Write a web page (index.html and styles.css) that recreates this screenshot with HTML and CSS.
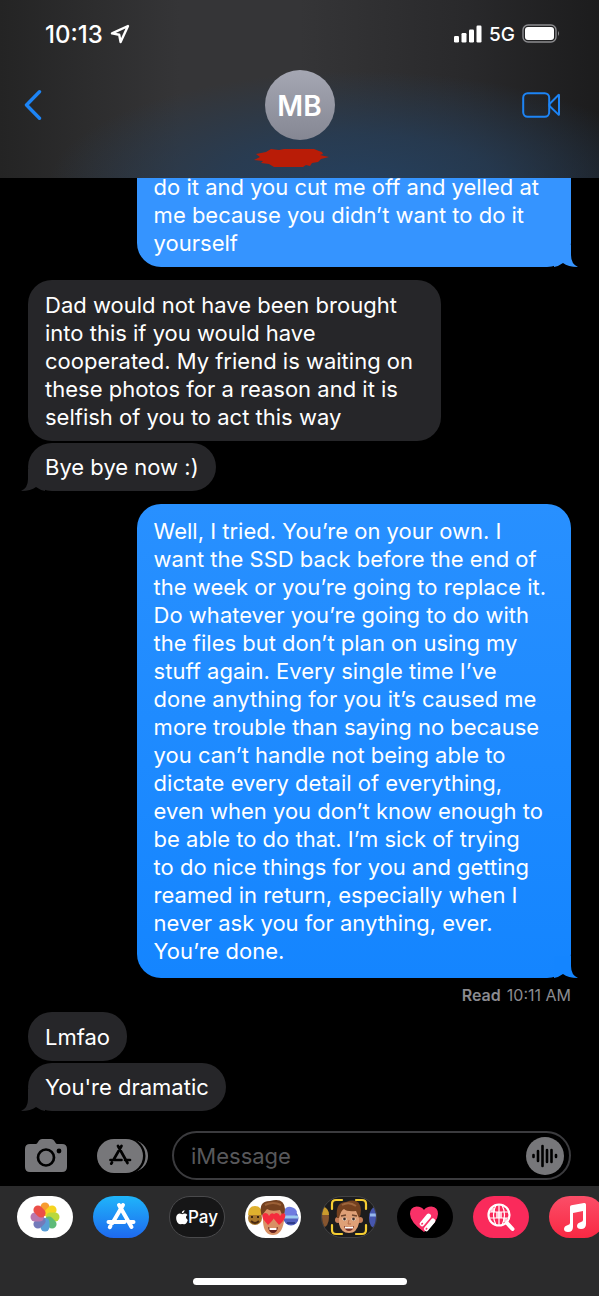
FILE: index.html
```html
<!DOCTYPE html>
<html lang="en">
<head>
<meta charset="utf-8">
<meta name="viewport" content="width=device-width, initial-scale=1">
<title>Messages</title>
<link rel="stylesheet" href="styles.css">
</head>
<body>
<div class="phone">
  <header class="header">
    <div class="status">
      <div class="status-group">
        <time class="clock">10:13</time>
        <svg class="location" viewBox="0 0 20 20" aria-hidden="true"><path d="M18 2 2 9.4l7.2 1.3L10.600 18Z" fill="none" stroke="#fff" stroke-width="2.400" stroke-linejoin="round"/></svg>
      </div>
      <div class="status-group">
        <svg class="signal" viewBox="0 0 28 18" fill="#fff" aria-hidden="true"><rect y="11" width="5" height="6.500" rx="1.200"/><rect x="7.500" y="8" width="5" height="9.500" rx="1.200"/><rect x="15" y="4.500" width="5" height="13" rx="1.200"/><rect x="22.500" y=".5" width="5" height="17" rx="1.200"/></svg>
        <span class="network">5G</span>
        <svg class="battery" viewBox="0 0 38 20" aria-hidden="true"><rect x="1" y="1" width="33" height="17" rx="5" fill="none" stroke="#8c8c8f" stroke-width="1.400"/><rect x="3" y="3" width="29" height="13" rx="3" fill="#fff"/><path d="M36 7q2 2.500 0 5Z" fill="#8c8c8f"/></svg>
      </div>
    </div>
    <div class="nav">
      <button class="icon-button" aria-label="Back"><svg class="back" viewBox="0 0 18 30"><path d="M15.500 1.800 2.500 15l13 13.200" fill="none" stroke="#1d84f5" stroke-width="3.400" stroke-linecap="round" stroke-linejoin="round"/></svg></button>
      <button class="contact" aria-label="Contact details">
        <span class="avatar">MB</span>
        <svg class="scribble" viewBox="0 0 76 20" aria-hidden="true"><path d="m0 12 6-3-4-3 10-2 5-3 8 1 5-1h30l5 2 3 1 1 2-3 1 9 2-8 2-3 3-6 1-2 3-4-1-3 2H20l-5-3-8-1 2-2Z" fill="#b91c07"/></svg>
      </button>
      <button class="icon-button" aria-label="FaceTime"><svg class="video" viewBox="0 0 38 26"><g fill="none" stroke="#1d84f5" stroke-width="2" stroke-linejoin="round"><rect x="1.200" y="1.200" width="26" height="23.600" rx="4.500"/><path d="m27.500 12 9-9q.5-.4.5.4v18.800q0 .8-.5.400L27.500 14Z"/></g></svg></button>
    </div>
  </header>

  <main class="thread">
    <p class="bubble sent sent-early tail-right">do it and you cut me off and yelled at me because you didn’t want to do it yourself</p>
    <div class="group">
      <p class="bubble received">Dad would not have been brought into this if you would have cooperated. My friend is waiting on these photos for a reason and it is selfish of you to act this way</p>
      <p class="bubble received tail-left">Bye bye now :)</p>
    </div>
    <p class="bubble sent long tail-right">Well, I tried. You’re on your own. I want the SSD back before the end of the week or you’re going to replace it. Do whatever you’re going to do with the files but don’t plan on using my stuff again. Every single time I’ve done anything for you it’s caused me more trouble than saying no because you can’t handle not being able to dictate every detail of everything, even when you don’t know enough to be able to do that. I’m sick of trying<br> to do nice things for you and getting reamed in return, especially when I never ask you for anything, ever. You’re done.</p>
    <p class="receipt"><b>Read</b> <span>10:11 AM</span></p>
    <div class="group">
      <p class="bubble received">Lmfao</p>
      <p class="bubble received tail-left">You're dramatic</p>
    </div>
  </main>

  <form class="composer">
    <button type="button" class="icon-button" aria-label="Camera"><svg class="camera" viewBox="0 0 42 34"><path d="M5 5h6q1 0 2-2l1-1.500Q15 0 17 0h9q2 0 3 1.500L30 3q1 2 2 2h5q5 0 5 5v18q0 5-5 5H5q-5 0-5-5V10q0-5 5-5Z" fill="#77777a"/><circle cx="21" cy="18.500" r="8" fill="none" stroke="#000" stroke-width="2.700"/><circle cx="34" cy="12" r="2.400" fill="#000"/></svg></button>
    <button type="button" class="icon-button" aria-label="Apps"><svg class="drawer" viewBox="0 0 51 34"><rect x="5" y="1" width="46" height="32" rx="16" fill="#77777a"/><rect x="1" y="-1" width="47.500" height="36" rx="18" fill="#000"/><rect width="46" height="34" rx="17" fill="#77777a"/><g fill="none" stroke="#000" stroke-width="2.700" stroke-linecap="round"><path d="m21 7 9.500 17M24.500 7 17 20M13.500 21h11M28 21h5M15 23.500l-.8 1.200"/></g></svg></button>
    <label class="field">
      <input type="text" placeholder="iMessage" aria-label="iMessage">
      <button type="button" class="icon-button" aria-label="Record audio"><svg class="audio" viewBox="0 0 38 38"><circle cx="19" cy="19" r="19" fill="#77777a"/><path d="M7.500 18v2M12 14v10M16.500 9v20M21 13v12M25.500 13v12M30 18v2" stroke="#000" stroke-width="2.600" stroke-linecap="round"/></svg></button>
    </label>
  </form>

  <footer class="dock">
    <nav class="apps" aria-label="iMessage apps">
      <button class="app photos" aria-label="Photos"><svg viewBox="0 0 56 42"><g opacity=".92"><rect x="23.500" y="6.500" width="9" height="13.500" rx="4.500" fill="#f7941e"/><rect x="23.500" y="6.500" width="9" height="13.500" rx="4.500" fill="#f6d10c" transform="rotate(45 28 21)"/><rect x="23.500" y="6.500" width="9" height="13.500" rx="4.500" fill="#b3d52c" transform="rotate(90 28 21)"/><rect x="23.500" y="6.500" width="9" height="13.500" rx="4.500" fill="#51b56d" transform="rotate(135 28 21)"/><rect x="23.500" y="6.500" width="9" height="13.500" rx="4.500" fill="#4b96d3" transform="rotate(180 28 21)"/><rect x="23.500" y="6.500" width="9" height="13.500" rx="4.500" fill="#686fb5" transform="rotate(225 28 21)"/><rect x="23.500" y="6.500" width="9" height="13.500" rx="4.500" fill="#b36da8" transform="rotate(270 28 21)"/><rect x="23.500" y="6.500" width="9" height="13.500" rx="4.500" fill="#ea4039" transform="rotate(315 28 21)"/></g></svg></button>
      <button class="app store" aria-label="App Store"><svg viewBox="0 0 56 42"><g fill="none" stroke="#fff" stroke-width="4" stroke-linecap="round"><path d="m26 9 12.500 22M30 9 19.500 27M15.500 26h16M36 26h4.500M17.500 30l-.7 1.200"/></g></svg></button>
      <button class="app pay" aria-label="Apple Pay"><svg class="apple" viewBox="0 0 12 15"><path d="M8.500 0q0 3-2.800 3.200Q5.700.8 8.500 0ZM6.200 4.200Q9.500 2.500 11.500 5q-3.300 2 .3 5-1.600 4.800-3.800 4.300-1.800-.8-3.600 0Q1.700 14.300.4 10 -.7 4.300 3.500 3.500q1.500.1 2.700.7Z" fill="#fff"/></svg><span>Pay</span></button>
      <button class="app memoji-light" aria-label="Memoji stickers"><svg viewBox="0 0 56 42">
        <circle cx="10" cy="22" r="7" fill="#a9762b"/><path d="M3 19q0-9 7-9t7 9Z" fill="#dfb02e"/><path d="M6 21h2m4 0h2" stroke="#3b2410" stroke-width="2"/><path d="M6 25q4 4 8 0" stroke="#4b2b12" stroke-width="2" fill="none"/>
        <circle cx="46" cy="22" r="7.500" fill="#5361bf"/><path d="M39 15q2-5 7-4t6 5l-2 4H40Z" fill="#6f7be0"/><path d="M39 21h14" stroke="#9cc9ef" stroke-width="3"/><path d="M42 27h8" stroke="#303d8c" stroke-width="2"/>
        <path d="M18 17q0-10 10-10t11 10v8q-2 14-11 14T18 26Z" fill="#d99064"/><path d="M17 21Q12 5 25 5q14-4 15 8 0 5-2 8l-3-7q-9 2-13-1l-4 5Z" fill="#75411f"/><path d="M20 9q8-4 16 0" stroke="#9b6036" stroke-width="2" fill="none"/>
        <path d="m23 29-5-6q-2-5 2-6 3 0 4 3 2-4 5-2 3 3-6 11ZM34 29l-5-6q-2-5 2-6 3 0 4 3 2-4 5-2 2 4-6 11Z" fill="#f52c3d"/><path d="M23 31q5 3 10 0-1 6-5 6t-5-6Z" fill="#65221e"/><path d="M24.500 32h7v2h-7Z" fill="#fff"/></svg></button>
      <button class="app memoji-dark" aria-label="Memoji"><svg viewBox="0 0 56 42">
        <path d="M0 12q8-1 8 9t-7 11Z" fill="#86552f"/><path d="M1 10q7 2 7 9H0Z" fill="#c99b2d"/><path d="M56 10q-8 2-8 12t7 10Z" fill="#4656ae"/><path d="M49 19h7" stroke="#96b8ec" stroke-width="3"/>
        <circle cx="17" cy="24" r="3" fill="#c77f58"/><circle cx="39" cy="24" r="3" fill="#c77f58"/><path d="M18 17q0-7 10-7t10 8v9q-2 10-10 10t-10-9Z" fill="#dfa077"/><path d="M16 22Q14 6 25 6q14-5 15 8 0 5-2 8l-3-7q-9 1-12-2-3 1-5 9Z" fill="#75411f"/><path d="M21 9q7-4 14 1" stroke="#9e653c" stroke-width="2" fill="none"/>
        <path d="m20 20 5-1m6 0 5 1" stroke="#70452d" stroke-width="1.500"/><ellipse cx="23.500" cy="23" rx="2" ry="1.500" fill="#fff"/><ellipse cx="32.500" cy="23" rx="2" ry="1.500" fill="#fff"/><circle cx="23.500" cy="23" r="1.400" fill="#422b20"/><circle cx="32.500" cy="23" r="1.400" fill="#422b20"/><path d="m28 24-1 4h3" fill="none" stroke="#b96e4b"/><path d="M23 30q5 2 10 0-1 5-5 5t-5-5Z" fill="#752e27"/><path d="M24 30.500q4 1 8 0v2h-8Z" fill="#fff"/>
        <path d="M11 13V8q0-4 4-4h6M35 4h6q4 0 4 4v5M45 29v5q0 4-4 4h-6M21 38h-6q-4 0-4-4v-5" fill="none" stroke="#f5cd32" stroke-width="2.200" stroke-linecap="round"/></svg></button>
      <button class="app touch" aria-label="Digital Touch"><svg viewBox="0 0 56 42"><path d="M27 36Q13 26 13 18q0-7 6.500-7.500Q25 10.500 27 14q2-3.500 7.500-3.500Q41 11 41 18q0 8-14 18Z" fill="#fa3168"/><g transform="rotate(-50 30 26)"><rect x="23" y="21" width="15" height="4.800" rx="2.200" fill="#fff"/><rect x="22" y="27.500" width="15" height="4.800" rx="2.200" fill="#fff"/><path d="M24.500 23.400h2m-3 6.500h2" stroke="#fa3168" stroke-width="1.500"/></g></svg></button>
      <button class="app images" aria-label="Images"><svg viewBox="0 0 56 42"><g fill="none" stroke="#fff" stroke-linecap="round"><circle cx="26" cy="19" r="10.500" stroke-width="2.200"/><path d="m34 27 5.500 6" stroke-width="4"/><path d="M16 16h20M16 22h20M26 9v20M23 9q-5 10 0 20M29 9q5 10 0 20" stroke-width="1.200"/></g><path d="M23 16h6v6h-6ZM18 12h4v4h-4ZM30 22h4v4h-4Z" fill="#fff" opacity=".75"/></svg></button>
      <button class="app music" aria-label="Music"><svg viewBox="0 0 56 42"><path d="M21 11q0-1.500 1.500-1.800L35 7q2-.3 2 1.500V28q0 5-5 5-4 0-4-3t4-4q2-.3 2-2V15l-10 2v14q0 5-5 5-4 0-4-3t4-4q2-.3 2-2Z" fill="#fff"/></svg></button>
    </nav>
    <div class="home"></div>
  </footer>
</div>
</body>
</html>
```

FILE: styles.css
```css
* { box-sizing: border-box; }

body {
  margin: 0;
  background: #000;
  color: #fff;
  font-family: Inter, "Liberation Sans", sans-serif;
}

button {
  padding: 0;
  border: 0;
  background: none;
  color: inherit;
  font: inherit;
}

svg { display: block; }

p { margin: 0; }

.phone {
  display: flex;
  flex-direction: column;
  height: 100vh;
  overflow: hidden;
}

.header {
  flex: none;
  display: flex;
  flex-direction: column;
  gap: 20px;
  height: 178px;
  padding: 20px 39px 0 24px;
  background:
    radial-gradient(ellipse 52% 65% at 60% 105%, #25405e 0%, rgba(37, 62, 90, 0.75) 45%, rgba(37, 50, 66, 0) 100%),
    linear-gradient(90deg, #242424 0%, #353537 30%, #353537 50%, #29292b 78%, #1c1c1d 100%);
}

.status {
  display: flex;
  align-items: center;
  justify-content: space-between;
  height: 28px;
  padding-left: 21px;
}

.status-group {
  display: flex;
  align-items: center;
  gap: 7px;
}

.clock {
  font-size: 24px;
  font-weight: 500;
}

.location { width: 20px; height: 20px; }
.signal { width: 28px; height: 18px; }
.network { font-size: 19px; font-weight: 500; }
.battery { width: 38px; height: 20px; }

.nav {
  display: grid;
  grid-template-columns: 1fr auto 1fr;
  align-items: start;
}

.nav .icon-button {
  display: flex;
  align-items: center;
  height: 74px;
}

.nav .icon-button:last-child { justify-self: end; }
.back { width: 18px; height: 30px; }
.video { width: 38px; height: 26px; }

.contact {
  display: flex;
  flex-direction: column;
  align-items: center;
  gap: 8px;
  padding: 2px 0 0 15px;
}

.avatar {
  width: 70px;
  height: 70px;
  border-radius: 50%;
  background: linear-gradient(#a5a7b3, #858793);
  font-size: 28px;
  font-weight: 600;
  line-height: 72px;
}

.scribble { width: 76px; height: 20px; margin: 0 8px 0 -8px; }

.thread {
  flex: 1;
  min-height: 0;
  display: flex;
  flex-direction: column;
  justify-content: flex-end;
  gap: 13px;
  padding: 0 28px 14px;
  overflow: hidden;
}

.group {
  display: flex;
  flex-direction: column;
  align-items: flex-start;
  gap: 2px;
}

.bubble {
  position: relative;
  flex: none;
  max-width: 80%;
  padding: 10px 17px;
  border-radius: 24px;
  font-size: 22px;
  line-height: 28px;
}

.received {
  max-width: 413px;
  background: #262629;
}

.group .bubble:first-child { padding: 11px 17px; }
.group .bubble:first-child:has(+ .tail-left):not(:only-child) { padding-bottom: 10px; }

.sent {
  align-self: flex-end;
  width: 435px;
  background: linear-gradient(#2890ff, #1485ff);
}

.sent-early {
  border-radius: 0 0 24px 24px;
  background: #3594ff;
}

.long { padding: 13px 17px; }

.tail-left::before,
.tail-right::after {
  content: "";
  position: absolute;
  bottom: 0;
  width: 24px;
  height: 22px;
}

.tail-left::before {
  left: -7px;
  background: #262629;
  clip-path: path("M7 0 V10 Q7 19 0 22 Q10 22 15 18 Q19 21 24 22 V0 Z");
}

.tail-right::after {
  right: -7px;
  background: #1485ff;
  clip-path: path("M17 0 V10 Q17 19 24 22 Q14 22 9 18 Q5 21 0 22 V0 Z");
}

.sent-early::after { background: #3594ff; }

.receipt {
  align-self: flex-end;
  display: flex;
  gap: 6px;
  margin: -4px 0;
  color: #8b8b90;
  font-size: 16px;
  line-height: 16px;
}

.receipt b { font-weight: 600; }

.composer {
  flex: none;
  display: flex;
  align-items: center;
  padding: 6px 28px 6px 25px;
}

.camera { width: 42px; height: 34px; }
.drawer { width: 51px; height: 34px; margin: 0 24px 0 30px; }

.field {
  flex: 1;
  min-width: 0;
  display: flex;
  align-items: center;
  height: 49px;
  padding: 0 5px 0 17px;
  border: 2px solid #3b3b3e;
  border-radius: 25px;
}

.field input {
  flex: 1;
  min-width: 0;
  padding: 0;
  border: 0;
  outline: 0;
  background: none;
  color: #fff;
  font: 22px/28px Inter, "Liberation Sans", sans-serif;
}

.field input::placeholder { color: #58585b; opacity: 1; }
.audio { width: 38px; height: 38px; }

.dock {
  flex: none;
  display: flex;
  flex-direction: column;
  align-items: center;
  justify-content: space-between;
  height: 110px;
  padding: 10px 0 11px;
  background: #2b2b2c;
}

.apps {
  display: flex;
  gap: 20px;
  width: 100%;
  padding-left: 17px;
  overflow: hidden;
}

.app {
  flex: none;
  display: flex;
  align-items: center;
  justify-content: center;
  width: 56px;
  height: 42px;
  border-radius: 21px;
  overflow: hidden;
}

.app svg { flex: none; width: 56px; height: 42px; }
.app .apple { width: 12px; height: 15px; }
.photos, .memoji-light { background: #fff; }
.store { background: linear-gradient(#1fb5fa, #1e69ef); }
.pay { border: 1px solid #4a4a4c; background: #161617; font-size: 17px; font-weight: 500; }
.memoji-dark { border: 1px solid #434345; background: #1c1c1d; }
.touch { background: #000; }
.images { background: #fa2a5b; }
.music { background: linear-gradient(#fb4e68, #f92843); }

.home {
  width: 214px;
  height: 7px;
  border-radius: 4px;
  background: #fff;
}
```
